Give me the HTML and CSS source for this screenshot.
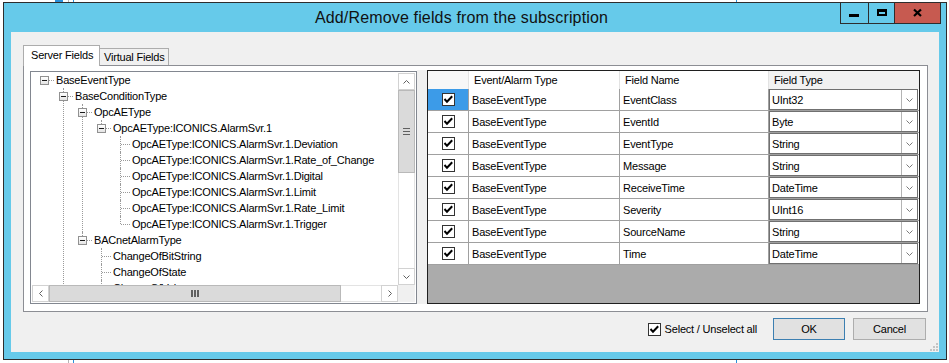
FILE: index.html
```html
<!doctype html>
<html lang="en">

<head>
    <meta charset="UTF-8">
    <title>Add/Remove fields from the subscription</title>
    <link rel="stylesheet" href="styles.css">
</head>

<body>
    <svg class="defs" width="0" height="0">
        <symbol id="ico_chk" viewBox="0 0 13 13">
            <rect x="0.5" y="0.5" width="12" height="12" fill="#fff" stroke="#333" />
            <path d="M2.5 6 5 8.8 10.2 3.2" fill="none" stroke="#000" stroke-width="2" />
        </symbol>
        <symbol id="ico_down" viewBox="0 0 7 4">
            <path d="M0.5 0.5 3.5 3.5 6.5 0.5" fill="none" stroke="currentColor" />
        </symbol>
        <symbol id="ico_up" viewBox="0 0 7 4">
            <path d="M0.5 3.5 3.5 0.5 6.5 3.5" fill="none" stroke="currentColor" />
        </symbol>
        <symbol id="ico_left" viewBox="0 0 4 7">
            <path d="M3.5 0.5 0.5 3.5 3.5 6.5" fill="none" stroke="currentColor" />
        </symbol>
        <symbol id="ico_right" viewBox="0 0 4 7">
            <path d="M0.5 0.5 3.5 3.5 0.5 6.5" fill="none" stroke="currentColor" />
        </symbol>
    </svg>

    <div class="desk">
        <!-- bits of the windows behind the dialog -->
        <span class="bit bit_a"></span>
        <span class="bit bit_b"></span>
        <span class="bit bit_c"></span>
        <span class="bit bit_d"></span>

        <div class="window">
            <div class="titlebar">
                <span class="title">Add/Remove fields from the subscription</span>
                <div class="winbtns">
                    <span class="wb wb_min"><svg width="27" height="20" viewBox="0 0 27 20"><rect x="8" y="11" width="10" height="3" fill="#000" /></svg></span>
                    <span class="wb wb_max"><svg width="25" height="20" viewBox="0 0 25 20"><path d="M8 6h10v7H8z M10 9v2h6V9z" fill="#000" fill-rule="evenodd" /></svg></span>
                    <span class="wb wb_close"><svg width="45" height="20" viewBox="0 0 45 20"><path d="M19 6.5 26 13 M26 6.5 19 13" stroke="#000" stroke-width="2.2" /></svg></span>
                </div>
            </div>

            <div class="client">
                <div class="tabstrip">
                    <span class="tab tab_on">Server Fields</span>
                    <span class="tab tab_off">Virtual Fields</span>
                </div>

                <div class="tabpage">
                    <div class="tree">
                        <div class="tree_view">
                            <ul class="tv">
                                <li class="root end"><span class="node"><i class="exp"></i>BaseEventType</span>
                                    <ul>
                                        <li><span class="node"><i class="exp"></i>BaseConditionType</span>
                                            <ul>
                                                <li><span class="node"><i class="exp"></i>OpcAEType</span>
                                                    <ul>
                                                        <li class="end"><span class="node"><i class="exp"></i>OpcAEType:ICONICS.AlarmSvr.1</span>
                                                            <ul>
                                                                <li><span class="node">OpcAEType:ICONICS.AlarmSvr.1.Deviation</span></li>
                                                                <li><span class="node">OpcAEType:ICONICS.AlarmSvr.1.Rate_of_Change</span></li>
                                                                <li><span class="node">OpcAEType:ICONICS.AlarmSvr.1.Digital</span></li>
                                                                <li><span class="node">OpcAEType:ICONICS.AlarmSvr.1.Limit</span></li>
                                                                <li><span class="node">OpcAEType:ICONICS.AlarmSvr.1.Rate_Limit</span></li>
                                                                <li class="end"><span class="node">OpcAEType:ICONICS.AlarmSvr.1.Trigger</span></li>
                                                            </ul>
                                                        </li>
                                                    </ul>
                                                </li>
                                                <li class="end"><span class="node"><i class="exp"></i>BACnetAlarmType</span>
                                                    <ul>
                                                        <li><span class="node">ChangeOfBitString</span></li>
                                                        <li><span class="node">ChangeOfState</span></li>
                                                        <li><span class="node">ChangeOfValue</span></li>
                                                    </ul>
                                                </li>
                                            </ul>
                                        </li>
                                    </ul>
                                </li>
                            </ul>
                        </div>

                        <div class="vscroll">
                            <span class="sb_btn"><svg width="7" height="4"><use href="#ico_up" /></svg></span>
                            <span class="sb_thumb"><i class="grip_v"></i></span>
                            <span class="sb_track"></span>
                            <span class="sb_btn"><svg width="7" height="4"><use href="#ico_down" /></svg></span>
                        </div>
                        <div class="hscroll">
                            <span class="sb_btn"><svg width="4" height="7"><use href="#ico_left" /></svg></span>
                            <span class="sb_thumb"><i class="grip_h"></i></span>
                            <span class="sb_track"></span>
                            <span class="sb_btn"><svg width="4" height="7"><use href="#ico_right" /></svg></span>
                        </div>
                        <div class="sb_corner"></div>
                    </div>

                    <div class="splitter"></div>

                    <div class="grid">
                        <div class="dg_row dg_head">
                            <span class="c0"></span>
                            <span>Event/Alarm Type</span>
                            <span>Field Name</span>
                            <span class="ft">Field Type</span>
                        </div>
                        <div class="dg_row dg_sel">
                            <span class="c0"><svg class="cb"><use href="#ico_chk" /></svg></span>
                            <span>BaseEventType</span>
                            <span>EventClass</span>
                            <span class="ft"><span class="combo"><span class="combo_text">UInt32</span><span class="combo_btn"><svg width="7" height="4"><use href="#ico_down" /></svg></span></span></span>
                        </div>
                        <div class="dg_row">
                            <span class="c0"><svg class="cb"><use href="#ico_chk" /></svg></span>
                            <span>BaseEventType</span>
                            <span>EventId</span>
                            <span class="ft"><span class="combo"><span class="combo_text">Byte</span><span class="combo_btn"><svg width="7" height="4"><use href="#ico_down" /></svg></span></span></span>
                        </div>
                        <div class="dg_row">
                            <span class="c0"><svg class="cb"><use href="#ico_chk" /></svg></span>
                            <span>BaseEventType</span>
                            <span>EventType</span>
                            <span class="ft"><span class="combo"><span class="combo_text">String</span><span class="combo_btn"><svg width="7" height="4"><use href="#ico_down" /></svg></span></span></span>
                        </div>
                        <div class="dg_row">
                            <span class="c0"><svg class="cb"><use href="#ico_chk" /></svg></span>
                            <span>BaseEventType</span>
                            <span>Message</span>
                            <span class="ft"><span class="combo"><span class="combo_text">String</span><span class="combo_btn"><svg width="7" height="4"><use href="#ico_down" /></svg></span></span></span>
                        </div>
                        <div class="dg_row">
                            <span class="c0"><svg class="cb"><use href="#ico_chk" /></svg></span>
                            <span>BaseEventType</span>
                            <span>ReceiveTime</span>
                            <span class="ft"><span class="combo"><span class="combo_text">DateTime</span><span class="combo_btn"><svg width="7" height="4"><use href="#ico_down" /></svg></span></span></span>
                        </div>
                        <div class="dg_row">
                            <span class="c0"><svg class="cb"><use href="#ico_chk" /></svg></span>
                            <span>BaseEventType</span>
                            <span>Severity</span>
                            <span class="ft"><span class="combo"><span class="combo_text">UInt16</span><span class="combo_btn"><svg width="7" height="4"><use href="#ico_down" /></svg></span></span></span>
                        </div>
                        <div class="dg_row">
                            <span class="c0"><svg class="cb"><use href="#ico_chk" /></svg></span>
                            <span>BaseEventType</span>
                            <span>SourceName</span>
                            <span class="ft"><span class="combo"><span class="combo_text">String</span><span class="combo_btn"><svg width="7" height="4"><use href="#ico_down" /></svg></span></span></span>
                        </div>
                        <div class="dg_row">
                            <span class="c0"><svg class="cb"><use href="#ico_chk" /></svg></span>
                            <span>BaseEventType</span>
                            <span>Time</span>
                            <span class="ft"><span class="combo"><span class="combo_text">DateTime</span><span class="combo_btn"><svg width="7" height="4"><use href="#ico_down" /></svg></span></span></span>
                        </div>
                    </div>
                </div>

                <div class="footer">
                    <label class="chk_all"><svg class="cb"><use href="#ico_chk" /></svg>Select / Unselect all</label>
                    <button type="button" class="btn btn_ok">OK</button>
                    <button type="button" class="btn btn_cancel">Cancel</button>
                </div>

                <svg class="size_grip" width="8" height="8" viewBox="0 0 8 8">
                    <rect x="6" y="0" width="2" height="2" fill="#c4c4c4" />
                    <rect x="3" y="3" width="2" height="2" fill="#c4c4c4" />
                    <rect x="6" y="3" width="2" height="2" fill="#c4c4c4" />
                    <rect x="0" y="6" width="2" height="2" fill="#c4c4c4" />
                    <rect x="3" y="6" width="2" height="2" fill="#c4c4c4" />
                    <rect x="6" y="6" width="2" height="2" fill="#c4c4c4" />
                </svg>
            </div>
        </div>
    </div>
</body>

</html>
```

FILE: styles.css
```css
* {
    margin: 0;
    padding: 0;
    box-sizing: border-box;
}

li {
    list-style: none;
}

html,
body {
    width: 949px;
    height: 363px;
    overflow: hidden;
    background: #fff;
}

body {
    font-family: "Liberation Sans", Arial, sans-serif;
    font-size: 11px;
    letter-spacing: -0.2px;
    color: #000;
}

.defs {
    position: absolute;
    width: 0;
    height: 0;
}

.desk {
    position: relative;
    width: 949px;
    height: 363px;
}

/* windows behind */
.bit {
    position: absolute;
    display: block;
}

.bit_a {
    left: 55px;
    top: 0;
    width: 8px;
    height: 2px;
    background: #2b8fd8;
}

.bit_b {
    left: 68px;
    top: 0;
    width: 1px;
    height: 363px;
    background: #b4b4b4;
}

.bit_c {
    left: 73px;
    top: 0;
    width: 1px;
    height: 363px;
    background: #2b8fd8;
}

.bit_d {
    left: 736px;
    top: 0;
    width: 1px;
    height: 363px;
    background: #2b8fd8;
}

/* dialog */
.window {
    position: absolute;
    left: 3px;
    top: 2px;
    width: 944px;
    height: 358px;
    border: 1px solid #2d2d2d;
    background: #66caea;
    padding: 0 7px 7px 7px;
    display: flex;
    flex-direction: column;
}

.titlebar {
    height: 29px;
    flex: none;
    display: flex;
    align-items: center;
    justify-content: center;
    padding-right: 27px;
    font-size: 16px;
    letter-spacing: 0.15px;
    color: #111;
}

.winbtns {
    position: absolute;
    top: -1px;
    right: 5px;
    height: 22px;
    display: flex;
    border: 1px solid #2d2d2d;
}

.wb {
    display: block;
    height: 20px;
}

.wb svg {
    display: block;
}

.wb_min {
    width: 27px;
}

.wb_max {
    width: 26px;
    border-left: 1px solid #2d2d2d;
}

.wb_close {
    width: 46px;
    border-left: 1px solid #2d2d2d;
    background: #c75a50;
}

.client {
    flex: 1;
    position: relative;
    background: #f0f0f0;
    padding: 13px 11px 0 12px;
    display: flex;
    flex-direction: column;
}

/* tabs */
.tabstrip {
    height: 20px;
    display: flex;
    align-items: flex-end;
}

.tab {
    display: flex;
    align-items: center;
    border: 1px solid #acacac;
    border-bottom: none;
    white-space: nowrap;
}

.tab_on {
    width: 77px;
    height: 21px;
    margin-bottom: -1px;
    padding: 0 0 2px 7px;
    background: #fff;
    position: relative;
    z-index: 1;
}

.tab_off {
    width: 69px;
    height: 17px;
    border-left: none;
    padding-left: 4px;
    background: #f0f0f0;
}

.tabpage {
    height: 247px;
    border: 1px solid #8c8e94;
    background: #fff;
    padding: 4px 7px 7px 6px;
    display: flex;
}

/* tree */
.tree {
    width: 387px;
    margin-top: 1px;
    border: 1px solid #828790;
    padding: 1px;
    display: grid;
    grid-template-columns: 1fr 17px;
    grid-template-rows: 1fr 17px;
    background: #fff;
}

.tree_view {
    overflow: hidden;
    position: relative;
}

.tv {
    margin-top: -1px;
}

.tv li {
    position: relative;
}

.tv ul {
    margin-left: 19px;
}

.tv li::before {
    content: "";
    position: absolute;
    left: 12px;
    top: 0;
    bottom: 0;
    border-left: 1px dotted #9a9a9a;
}

.tv li.end::before {
    bottom: auto;
    height: 8px;
}

.tv li.root::before {
    display: none;
}

.node {
    display: block;
    position: relative;
    height: 16px;
    line-height: 16px;
    padding-left: 24px;
    white-space: nowrap;
}

.node::before {
    content: "";
    position: absolute;
    left: 13px;
    top: 8px;
    width: 9px;
    border-top: 1px dotted #9a9a9a;
}

.exp {
    position: absolute;
    left: 8px;
    top: 4px;
    width: 9px;
    height: 9px;
    border: 1px solid #919191;
    background: linear-gradient(#fff, #e4e4e4);
    z-index: 1;
}

.exp::after {
    content: "";
    position: absolute;
    left: 1px;
    top: 3px;
    width: 5px;
    height: 1px;
    background: #1a1a1a;
}

/* scrollbars */
.vscroll,
.hscroll {
    display: flex;
    color: #606060;
}

.vscroll {
    grid-column: 2;
    grid-row: 1;
    flex-direction: column;
}

.hscroll {
    grid-column: 1;
    grid-row: 2;
}

.sb_btn {
    width: 17px;
    height: 17px;
    flex: none;
    border: 1px solid #d2d2d2;
    background: #fff;
    display: flex;
    align-items: center;
    justify-content: center;
}

.sb_btn svg {
    display: block;
}

.sb_thumb {
    flex: none;
    background: #dadada;
    border: 1px solid #b9b9b9;
    display: flex;
    align-items: center;
    justify-content: center;
}

.vscroll .sb_thumb {
    height: 83px;
}

.hscroll .sb_thumb {
    width: 292px;
}

.sb_track {
    flex: 1;
    background: #fff;
}

.vscroll .sb_track {
    border-left: 1px solid #e3e3e3;
    border-right: 1px solid #e3e3e3;
}

.hscroll .sb_track {
    border-top: 1px solid #e3e3e3;
    border-bottom: 1px solid #e3e3e3;
}

.grip_v {
    width: 7px;
    height: 7px;
    background: repeating-linear-gradient(#606060 0 1px, transparent 1px 3px);
}

.grip_h {
    width: 8px;
    height: 7px;
    background: repeating-linear-gradient(90deg, #606060 0 2px, transparent 2px 3px);
}

.sb_corner {
    grid-column: 2;
    grid-row: 2;
    background: #f0f0f0;
}

.splitter {
    width: 10px;
    background: #f0f0f0;
}

/* data grid */
.grid {
    width: 493px;
    border: 1px solid #1f1f1f;
    background: #ababab;
}

.dg_row {
    display: grid;
    grid-template-columns: 41px 151px 149px 150px;
    height: 22px;
}

.dg_row > span {
    display: flex;
    align-items: center;
    padding-left: 3px;
    white-space: nowrap;
    background: #fff;
    border-right: 1px solid #a0a0a0;
    border-bottom: 1px solid #a0a0a0;
}

.dg_row > span:last-child {
    border-right: none;
    padding: 0 1px 0 0;
}

.dg_row > .c0 {
    justify-content: center;
    padding-left: 0;
}

.dg_head {
    height: 18px;
}

.dg_head > span {
    border-bottom: none;
    border-right-color: #e3e3e3;
    padding-left: 5px;
}

.dg_head > .c0 {
    background: #f7f7f7;
}

.dg_head > span:last-child {
    padding: 0 0 0 5px;
    background: #f1f1f1;
}

.dg_sel > .c0 {
    background: #3c9be8;
}

.cb {
    display: block;
    width: 13px;
    height: 13px;
    flex: none;
}

.combo {
    display: flex;
    width: 100%;
    height: 100%;
    border: 1px solid #707070;
    background: #fff;
}

.combo_text {
    flex: 1;
    display: flex;
    align-items: center;
    padding-left: 2px;
}

.combo_btn {
    width: 16px;
    border-left: 1px solid #b4b4b4;
    display: flex;
    align-items: center;
    justify-content: center;
    color: #7a7a7a;
}

.combo_btn svg {
    display: block;
}

/* footer */
.footer {
    height: 22px;
    margin-top: 6px;
    padding-right: 2px;
    display: flex;
    align-items: center;
    justify-content: flex-end;
}

.chk_all {
    display: flex;
    align-items: center;
    gap: 4px;
    margin-right: 16px;
    white-space: nowrap;
}

.btn {
    width: 72px;
    height: 22px;
    border: 1px solid #adadad;
    background: #e1e1e1;
    font-family: inherit;
    font-size: 11px;
    letter-spacing: -0.2px;
    color: #000;
}

.btn_ok {
    border-color: #3c7fb1;
}

.btn_cancel {
    width: 73px;
    margin-left: 8px;
}

.size_grip {
    position: absolute;
    right: 1px;
    bottom: 1px;
}
```
